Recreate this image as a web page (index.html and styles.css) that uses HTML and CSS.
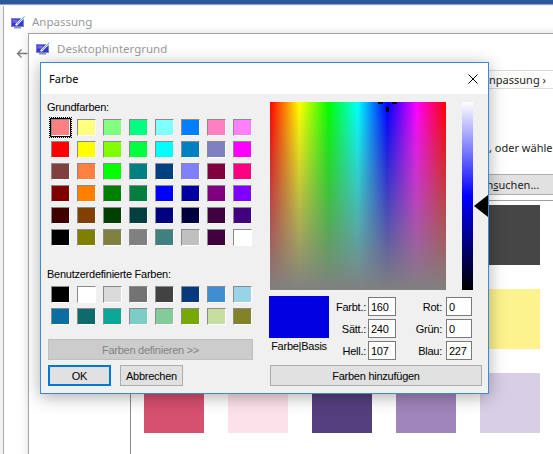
FILE: index.html
```html
<!DOCTYPE html>
<html lang="de">
<head>
  <meta charset="UTF-8">
  <title>Farbe</title>
  <link rel="stylesheet" href="styles.css">
</head>
<body>

  <div class="taskbar"></div>
  <span class="taskbar-title">Windows 10</span>

  <!-- window behind: Anpassung -->
  <div class="win win-main">
    <div class="win-title">
      <svg class="app-icon" width="15" height="14" viewBox="0 0 15 14">
        <rect x="0.5" y="3.5" width="12" height="8" fill="#3f33d2" stroke="#6f86d6"/>
        <rect x="1.5" y="4.5" width="5" height="3" fill="#7a63f2"/>
        <rect x="3" y="12" width="7" height="1.5" fill="#8a94ad"/>
        <path d="M5.5 9.5 L13.5 1.5" stroke="#f2f8ff" stroke-width="2.4" stroke-linecap="round"/>
        <path d="M6 9 L13.5 1.5" stroke="#4a9be0" stroke-width="0.9"/>
      </svg>
      <span>Anpassung</span>
    </div>
    <div class="main-body">
      <svg class="back" width="12" height="11" viewBox="0 0 12 11">
        <path d="M11.5 5.5H1.5M5.5 1.5L1.5 5.5L5.5 9.5" fill="none" stroke="#7a7a7a" stroke-width="1.3"/>
      </svg>
    </div>
  </div>

  <!-- window behind: Desktophintergrund -->
  <div class="win win-sub">
    <div class="win-title">
      <svg class="app-icon" width="15" height="14" viewBox="0 0 15 14">
        <rect x="0.5" y="3.5" width="12" height="8" fill="#3f33d2" stroke="#6f86d6"/>
        <rect x="1.5" y="4.5" width="5" height="3" fill="#7a63f2"/>
        <rect x="3" y="12" width="7" height="1.5" fill="#8a94ad"/>
        <path d="M5.5 9.5 L13.5 1.5" stroke="#f2f8ff" stroke-width="2.4" stroke-linecap="round"/>
        <path d="M6 9 L13.5 1.5" stroke="#4a9be0" stroke-width="0.9"/>
      </svg>
      <span>Desktophintergrund</span>
    </div>
    <div class="sub-body">
      <div class="addr">Anpassung &rsaquo;</div>
      <p class="hint">, oder wählen Sie mehrere Bilder aus, um eine Diashow zu erstellen.</p>
      <button class="browse">Durch<u>s</u>uchen...</button>
      <div class="pics">
        <div class="pic" style="background:#2f5d8a"></div>
        <div class="pic" style="background:#6a8fb5"></div>
        <div class="pic" style="background:#1e3f5a"></div>
        <div class="pic" style="background:#8a8a8a"></div>
        <div class="pic" style="background:#464646"></div>
        <div class="pic" style="background:#f6a04a"></div>
        <div class="pic" style="background:#e8625a"></div>
        <div class="pic" style="background:#5fb26a"></div>
        <div class="pic" style="background:#8fd0c4"></div>
        <div class="pic" style="background:#fdf38e"></div>
        <div class="pic" style="background:#d6506f"></div>
        <div class="pic" style="background:#fce0ea"></div>
        <div class="pic" style="background:#553f7e"></div>
        <div class="pic" style="background:#a084bc"></div>
        <div class="pic" style="background:#d8cfe6"></div>
      </div>
    </div>
  </div>

  <!-- the colour dialog -->
  <div class="dialog">
    <div class="dlg-title">
      <span>Farbe</span>
      <svg class="close" width="10" height="10" viewBox="0 0 10 10">
        <path d="M0.5 0.5L9.5 9.5M9.5 0.5L0.5 9.5" stroke="#000" stroke-width="1"/>
      </svg>
    </div>

    <div class="dlg-body">
      <div class="dlg-left">
        <div class="lbl">Grundfarben:</div>
        <div class="swatches">
          <div class="slot sel"><span class="sw" style="background:#ff8080"></span></div>
          <div class="slot"><span class="sw" style="background:#ffff80"></span></div>
          <div class="slot"><span class="sw" style="background:#80ff80"></span></div>
          <div class="slot"><span class="sw" style="background:#00ff80"></span></div>
          <div class="slot"><span class="sw" style="background:#80ffff"></span></div>
          <div class="slot"><span class="sw" style="background:#0080ff"></span></div>
          <div class="slot"><span class="sw" style="background:#ff80c0"></span></div>
          <div class="slot"><span class="sw" style="background:#ff80ff"></span></div>

          <div class="slot"><span class="sw" style="background:#ff0000"></span></div>
          <div class="slot"><span class="sw" style="background:#ffff00"></span></div>
          <div class="slot"><span class="sw" style="background:#80ff00"></span></div>
          <div class="slot"><span class="sw" style="background:#00ff40"></span></div>
          <div class="slot"><span class="sw" style="background:#00ffff"></span></div>
          <div class="slot"><span class="sw" style="background:#0080c0"></span></div>
          <div class="slot"><span class="sw" style="background:#8080c0"></span></div>
          <div class="slot"><span class="sw" style="background:#ff00ff"></span></div>

          <div class="slot"><span class="sw" style="background:#804040"></span></div>
          <div class="slot"><span class="sw" style="background:#ff8040"></span></div>
          <div class="slot"><span class="sw" style="background:#00ff00"></span></div>
          <div class="slot"><span class="sw" style="background:#008080"></span></div>
          <div class="slot"><span class="sw" style="background:#004080"></span></div>
          <div class="slot"><span class="sw" style="background:#8080ff"></span></div>
          <div class="slot"><span class="sw" style="background:#800040"></span></div>
          <div class="slot"><span class="sw" style="background:#ff0080"></span></div>

          <div class="slot"><span class="sw" style="background:#800000"></span></div>
          <div class="slot"><span class="sw" style="background:#ff8000"></span></div>
          <div class="slot"><span class="sw" style="background:#008000"></span></div>
          <div class="slot"><span class="sw" style="background:#008040"></span></div>
          <div class="slot"><span class="sw" style="background:#0000ff"></span></div>
          <div class="slot"><span class="sw" style="background:#0000a0"></span></div>
          <div class="slot"><span class="sw" style="background:#800080"></span></div>
          <div class="slot"><span class="sw" style="background:#8000ff"></span></div>

          <div class="slot"><span class="sw" style="background:#400000"></span></div>
          <div class="slot"><span class="sw" style="background:#804000"></span></div>
          <div class="slot"><span class="sw" style="background:#004000"></span></div>
          <div class="slot"><span class="sw" style="background:#004040"></span></div>
          <div class="slot"><span class="sw" style="background:#000080"></span></div>
          <div class="slot"><span class="sw" style="background:#000040"></span></div>
          <div class="slot"><span class="sw" style="background:#400040"></span></div>
          <div class="slot"><span class="sw" style="background:#400080"></span></div>

          <div class="slot"><span class="sw" style="background:#000000"></span></div>
          <div class="slot"><span class="sw" style="background:#808000"></span></div>
          <div class="slot"><span class="sw" style="background:#808040"></span></div>
          <div class="slot"><span class="sw" style="background:#808080"></span></div>
          <div class="slot"><span class="sw" style="background:#408080"></span></div>
          <div class="slot"><span class="sw" style="background:#c0c0c0"></span></div>
          <div class="slot"><span class="sw" style="background:#400040"></span></div>
          <div class="slot"><span class="sw" style="background:#ffffff"></span></div>
        </div>

        <div class="lbl lbl-custom">Benutzerdefinierte Farben:</div>
        <div class="swatches">
          <div class="slot"><span class="sw" style="background:#000000"></span></div>
          <div class="slot"><span class="sw" style="background:#ffffff"></span></div>
          <div class="slot"><span class="sw" style="background:#dadada"></span></div>
          <div class="slot"><span class="sw" style="background:#737373"></span></div>
          <div class="slot"><span class="sw" style="background:#424242"></span></div>
          <div class="slot"><span class="sw" style="background:#073a7a"></span></div>
          <div class="slot"><span class="sw" style="background:#408ed2"></span></div>
          <div class="slot"><span class="sw" style="background:#98d4e8"></span></div>

          <div class="slot"><span class="sw" style="background:#0a6fa0"></span></div>
          <div class="slot"><span class="sw" style="background:#0e6b6b"></span></div>
          <div class="slot"><span class="sw" style="background:#0aa898"></span></div>
          <div class="slot"><span class="sw" style="background:#7ccdc6"></span></div>
          <div class="slot"><span class="sw" style="background:#82cc9a"></span></div>
          <div class="slot"><span class="sw" style="background:#76a806"></span></div>
          <div class="slot"><span class="sw" style="background:#c6df9e"></span></div>
          <div class="slot"><span class="sw" style="background:#82822a"></span></div>
        </div>

        <button class="btn btn-wide" disabled>Farben definieren &gt;&gt;</button>
        <div class="btn-row">
          <button class="btn btn-ok">OK</button>
          <button class="btn">Abbrechen</button>
        </div>
      </div>

      <div class="dlg-right">
        <div class="picker">
          <div class="spectrum">
            <span class="ch ch-l"></span>
            <span class="ch ch-r"></span>
            <span class="ch ch-b"></span>
          </div>
          <div class="lum"><span class="lum-arrow"></span></div>
        </div>

        <div class="values">
          <div class="preview-col">
            <div class="preview"></div>
            <div class="preview-lbl">Farbe|Basis</div>
          </div>
          <div class="fields">
            <label class="f1">Farbt.:</label><input value="160">
            <label class="f2">Rot:</label><input value="0">
            <label class="f1">Sätt.:</label><input value="240">
            <label class="f2">Grün:</label><input value="0">
            <label class="f1">Hell.:</label><input value="107">
            <label class="f2">Blau:</label><input value="227">
          </div>
        </div>

        <button class="btn btn-add">Farben hinzufügen</button>
      </div>
    </div>
  </div>

</body>
</html>
```

FILE: styles.css
```css
* {
  margin: 0;
  padding: 0;
  box-sizing: border-box;
}

html, body {
  width: 553px;
  height: 454px;
  overflow: hidden;
}

body {
  position: relative;
  background: #f2f2f2;
  font-family: 'Noto Sans', sans-serif;
  font-size: 11px;
  color: #000;
}

/* top strip */
.taskbar {
  position: absolute;
  top: 0;
  left: 0;
  width: 100%;
  height: 5px;
  background: #2c5897;
  border-bottom: 1px solid #8da3c6;
  z-index: 4;
}

.taskbar-title {
  position: absolute;
  top: -7px;
  left: 272px;
  color: #555;
  font-size: 12px;
  line-height: 16px;
  z-index: 3;
}

/* background windows */
.win {
  position: absolute;
  right: -30px;
  bottom: -30px;
  background: #fff;
}

.win-main {
  top: 6px;
  left: 3px;
  border-left: 1px solid #a9a9a9;
}

.win-sub {
  top: 33px;
  left: 28px;
  border: 1px solid #a3a3a3;
  box-shadow: 0 0 9px rgba(0, 0, 0, 0.14);
}

.win-title {
  display: flex;
  align-items: center;
  gap: 6px;
  padding-left: 7px;
  color: #9a9a9a;
  font-size: 11.5px;
}

.win-main .win-title {
  height: 27px;
  padding-top: 4px;
}

.win-sub .win-title {
  height: 29px;
  padding-bottom: 1px;
}

.app-icon {
  flex: none;
}

.main-body {
  padding: 15px 0 0 12px;
}

.back {
  display: block;
}

.sub-body {
  padding-left: 101px;
}

.addr {
  margin: 7px 0 0 350px;
  height: 19px;
  padding-left: 1px;
  border: 1px solid #dcdcdc;
  border-right: none;
  line-height: 17px;
  color: #222;
  white-space: nowrap;
}

.hint {
  margin: 51px 0 0 359px;
  line-height: 16px;
  color: #222;
  white-space: nowrap;
}

.browse {
  display: block;
  margin: 18px 0 0 321px;
  width: 170px;
  height: 21px;
  padding-left: 10px;
  text-align: left;
  background: #e1e1e1;
  border: 1px solid #adadad;
  font-family: 'Noto Sans', sans-serif;
  font-size: 11px;
  color: #222;
}

.pics {
  margin-top: 5px;
  display: grid;
  grid-template-columns: repeat(5, 60px);
  grid-auto-rows: 60px;
  gap: 24px;
  padding: 4px 0 0 13px;
  border-top: 1px solid #a0a0a0;
  border-left: 1px solid #8c8c8c;
  height: 400px;
}

/* colour dialog */
.dialog {
  position: absolute;
  top: 62px;
  left: 40px;
  width: 449px;
  height: 332px;
  background: #f0f0f0;
  border: 1px solid #3a8ad6;
  box-shadow: 0 3px 16px rgba(0, 0, 0, 0.32);
  z-index: 5;
}

.dlg-title {
  height: 31px;
  display: flex;
  align-items: center;
  justify-content: space-between;
  padding: 0 10px 0 8px;
  background: #fff;
  font-size: 11px;
}

.close {
  display: block;
}

.dlg-body {
  display: flex;
  gap: 16px;
  padding: 7px 0 0 6px;
  font-family: 'Liberation Sans', Arial, sans-serif;
  font-size: 11px;
  letter-spacing: -0.25px;
}

.dlg-left {
  width: 207px;
  flex: none;
}

.lbl {
  line-height: 13px;
}

.lbl-custom {
  margin-top: 20px;
}

.swatches {
  display: grid;
  grid-template-columns: repeat(8, 23px);
  grid-auto-rows: 21px;
  column-gap: 3px;
  row-gap: 1px;
  margin: 3px 0 0 2px;
}

.slot {
  position: relative;
}

.sw {
  display: block;
  width: 19px;
  height: 17px;
  margin: 2px;
  border: 1px solid;
  border-color: #8a8a8a #fff #fff #8a8a8a;
}

.slot.sel {
  outline: 1px dotted #000;
  outline-offset: -1px;
}

.slot.sel .sw {
  box-shadow: 0 0 0 1px #000;
}

.btn {
  display: block;
  height: 21px;
  background: #e1e1e1;
  border: 1px solid #adadad;
  font-family: 'Liberation Sans', Arial, sans-serif;
  font-size: 11px;
  letter-spacing: -0.25px;
  color: #000;
}

.btn-wide {
  width: 205px;
  margin: 12px 0 0 1px;
  background: #cccccc;
  border-color: #bfbfbf;
  color: #838383;
}

.btn-row {
  display: flex;
  gap: 9px;
  margin: 5px 0 0 1px;
}

.btn-row .btn {
  width: 63px;
}

.btn-row .btn-ok {
  border: 2px solid #0078d7;
}

.dlg-right {
  width: 212px;
  flex: none;
}

.picker {
  display: flex;
  gap: 16px;
  margin-top: 1px;
}

.spectrum {
  position: relative;
  width: 176px;
  height: 188px;
  background:
    linear-gradient(to bottom, rgba(128, 128, 128, 0), #808080),
    linear-gradient(to right, #f00, #ff0 16.67%, #0f0 33.33%, #0ff 50%, #00f 66.67%, #f0f 83.33%, #f00);
}

.ch {
  position: absolute;
  background: #000;
}

.ch-l { left: 108px; top: 0; width: 5px; height: 2px; }
.ch-r { left: 122px; top: 0; width: 5px; height: 2px; }
.ch-b { left: 116px; top: 5px; width: 3px; height: 5px; }

.lum {
  position: relative;
  width: 11px;
  height: 188px;
  background: linear-gradient(to bottom, #fff, #00f 50%, #000);
}

.lum-arrow {
  position: absolute;
  left: 12px;
  top: 93px;
  width: 0;
  height: 0;
  border-style: solid;
  border-width: 11px 14px 11px 0;
  border-color: transparent #000 transparent transparent;
}

.values {
  display: flex;
  margin-top: 6px;
}

.preview-col {
  width: 60px;
  margin-left: -1px;
}

.preview {
  height: 42px;
  background: #0000e3;
}

.preview-lbl {
  margin-top: 2px;
  line-height: 13px;
  text-align: center;
}

.fields {
  display: grid;
  grid-template-columns: 38px 28px 50px 26px;
  grid-auto-rows: 19px;
  row-gap: 3px;
  align-items: center;
  margin: 1px 0 0 1px;
}

.fields label {
  text-align: right;
}

.fields .f1 { padding-right: 2px; }
.fields .f2 { padding-right: 4px; }

.fields input {
  width: 100%;
  height: 19px;
  padding: 0 2px;
  border: 1px solid #7a7a7a;
  background: #fff;
  font-family: 'Liberation Sans', Arial, sans-serif;
  font-size: 11px;
  letter-spacing: -0.25px;
  color: #000;
}

.btn-add {
  width: 212px;
  margin-top: 5px;
}
```
